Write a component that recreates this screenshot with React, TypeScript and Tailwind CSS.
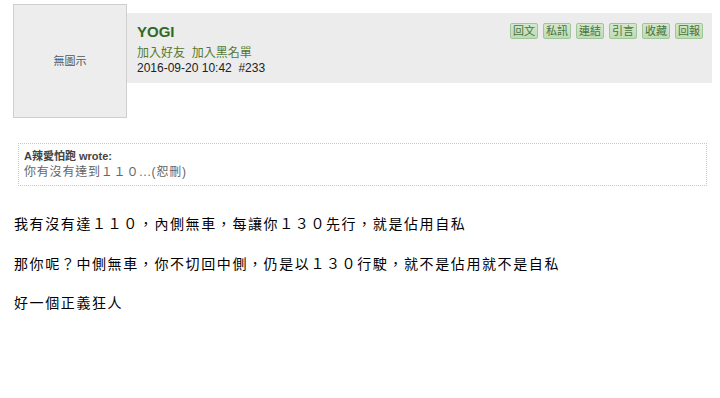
import React from 'react'

const buttons = ['回文', '私訊', '連結', '引言', '收藏', '回報']

const App = () => {
  return (
    <div
      className="w-[720px] h-[398px] bg-white text-black overflow-hidden"
      style={{ fontFamily: '"Liberation Sans", "Noto Sans CJK TC", sans-serif' }}
    >
      <div className="flex pl-[13px] pr-2 pt-[4px]">
        <div className="w-[114px] h-[114px] shrink-0 bg-[#ededed] border border-[#cfcfcf] flex items-center justify-center text-[11px] text-[#555]">
          無圖示
        </div>
        <div className="flex-1 mt-[9px] h-[70px] bg-[#ececec] flex justify-between pl-[10px] pr-[9px]">
          <div className="flex flex-col pt-[10px]">
            <div className="text-[15px] leading-[18px] font-bold text-[#2f6a25]">YOGI</div>
            <div className="text-[12px] leading-[15px] mt-[5px] text-[#55792f]">加入好友&nbsp;&nbsp;加入黑名單</div>
            <div className="text-[12px] leading-[15px] text-[#222]">2016-09-20 10:42&nbsp;&nbsp;#233</div>
          </div>
          <div className="flex gap-[5px] pt-[10px] items-start">
            {buttons.map((b) => (
              <div
                key={b}
                className="h-[16px] w-[28px] flex items-center justify-center rounded-[2px] border border-[#9fc697] bg-gradient-to-b from-[#d3e8cc] to-[#bfdab6] text-[11px] leading-none text-[#46733b]"
              >
                {b}
              </div>
            ))}
          </div>
        </div>
      </div>

      <div className="ml-[18px] mr-[13px] mt-[25px] h-[43px] border border-dotted border-[#c8c8c8] pl-[5px] pt-[5px]">
        <div className="text-[11px] leading-[14px] font-bold text-[#444]">A辣愛怕跑 wrote:</div>
        <div className="text-[12px] leading-[17px] mt-[1px] text-[#666] tracking-[0.8px]">你有沒有達到１１０...(恕刪)</div>
      </div>

      <div
        className="pl-[14px] mt-[27px] text-[14px] leading-[20px] tracking-[1.6px] text-black"
        style={{ fontFamily: '"Noto Sans CJK TC", sans-serif' }}
      >
        <div>我有沒有達１１０，內側無車，每讓你１３０先行，就是佔用自私</div>
        <div className="mt-[20px]">那你呢？中側無車，你不切回中側，仍是以１３０行駛，就不是佔用就不是自私</div>
        <div className="mt-[19px]">好一個正義狂人</div>
      </div>
    </div>
  )
}

export default App
